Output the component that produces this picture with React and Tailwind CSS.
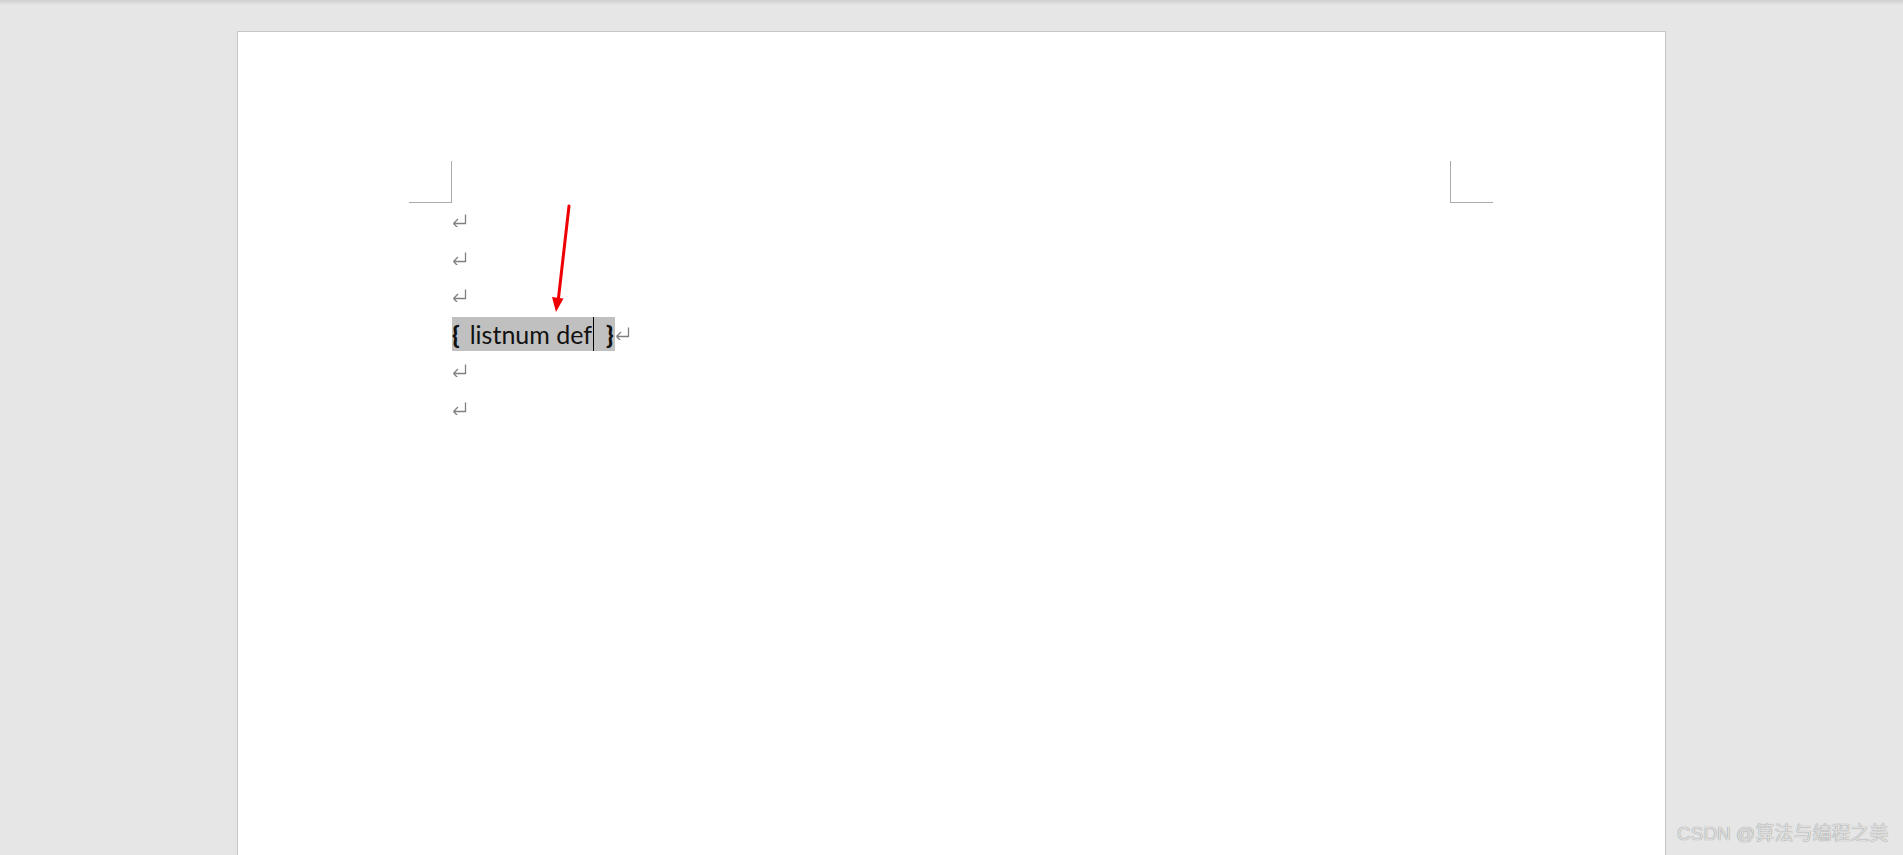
const ROWS = ['', '', '', 'field', '', ''];

function Mark() {
  return (
    <svg width="15" height="13" viewBox="0 0 15 13" className="shrink-0 -mt-[2px]">
      <path d="M13.5 0.5 V9.5 H1.5 M1.5 9.5 L6 5 M1.5 9.5 L6 14" fill="none" stroke="#7f7f7f" strokeWidth="1.3" />
    </svg>
  );
}

export default function App() {
  return (
    <div className="relative h-[855px] overflow-hidden bg-[#e6e6e6]">
      <div className="h-[5px] bg-gradient-to-b from-[#cfcfcf] to-[#e6e6e6]" />
      <div className="ml-[237px] mt-[26px] w-[1429px] h-[900px] bg-white border border-[#c6c6c6]">
        <div className="flex justify-between mt-[129px] pl-[171px] pr-[172px]">
          <div className="w-[43px] h-[42px] border-r border-b border-[#ababab]" />
          <div className="w-[43px] h-[42px] border-l border-b border-[#ababab]" />
        </div>
        <div className="flex flex-col pl-[214px]">
          {ROWS.map((r, i) => (
            <div key={i} className="h-[37.5px] flex items-center">
              {r === 'field' ? (
                <div className="flex items-center">
                  <div className="flex items-center h-[34px] bg-[#c0c0c0] text-[25px] text-[#111]" style={{ fontFamily: 'Lato, "Noto Sans", sans-serif' }}>
                    <span className="font-black">{'{'}</span>
                    <span className="ml-[10px]">listnum def</span>
                    <span className="w-px h-[34px] bg-black ml-[1px]" />
                    <span className="font-black ml-[12px] mr-[1px]">{'}'}</span>
                  </div>
                  <Mark />
                </div>
              ) : (
                <Mark />
              )}
            </div>
          ))}
        </div>
      </div>
      <svg className="absolute left-0 top-0" width="1903" height="855">
        <line x1="569" y1="206" x2="558.5" y2="298" stroke="#f00000" strokeWidth="3" strokeLinecap="round" />
        <polygon points="552,297 563.5,298.5 556,312" fill="#f00000" />
      </svg>
      <div className="absolute left-[1677px] top-[824px] text-[19px] text-[#dedede] leading-none" style={{ fontFamily: '"Liberation Sans", "Noto Sans CJK SC", sans-serif', textShadow: '0 0 1px #7a7a7a' }}>
        CSDN @算法与编程之美
      </div>
    </div>
  );
}
